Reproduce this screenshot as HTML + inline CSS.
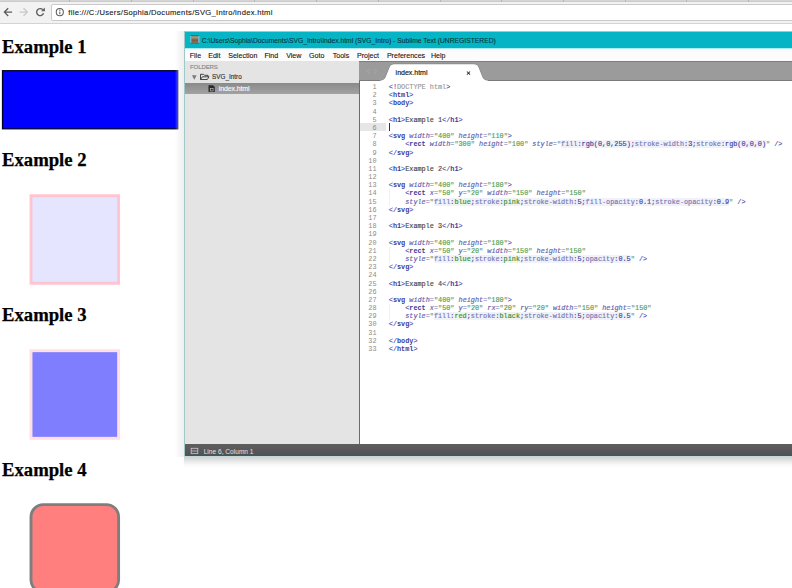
<!DOCTYPE html>
<html><head><meta charset="utf-8">
<style>
*{margin:0;padding:0;box-sizing:border-box}
html,body{width:792px;height:588px;overflow:hidden;background:#fff;position:relative;font-family:"Liberation Sans",sans-serif}
.a{position:absolute}
/* chrome */
#topstrip{left:0;top:0;width:792px;height:2px;background:linear-gradient(#dadada,#c6c6c6)}
#toolbar{left:0;top:2px;width:792px;height:22px;background:#f2f2f2;border-bottom:1px solid #d3d3d3}
#addr{left:51px;top:4px;width:760px;height:17px;background:#fff;border:1px solid #cacaca;border-radius:2px}
#url{left:68.3px;top:9.2px;font-size:7.6px;line-height:8px;color:#202020;-webkit-text-stroke:0.12px #202020;white-space:nowrap;letter-spacing:0.3px}
.tick{position:absolute;top:0;width:1px;height:2px;background:#b8b8b8}
/* page */
h1{position:absolute;left:2px;font-family:"Liberation Serif",serif;font-weight:bold;font-size:18.7px;line-height:18px;color:#000;white-space:nowrap;-webkit-text-stroke:0.25px #000}
/* sublime */
#win{left:183.8px;top:30.5px;width:620px;height:426px;background:#e5e5e5;border-left:1.4px solid #9fc8c8}
#lsh{left:175px;top:31px;width:9px;height:426px;background:linear-gradient(90deg,rgba(236,236,236,0),rgba(236,236,236,0.5) 50%,#efefef)}
#title{left:185px;top:30.5px;width:607px;height:18.5px;background:#06b5c5;border-top:1px solid #6fdde6;border-bottom:1px solid #a6eef2}
#ttext{left:201.8px;top:37px;font-size:6.72px;line-height:8px;color:#04343a;-webkit-text-stroke:0.1px #04343a;white-space:nowrap;letter-spacing:0.02px}
#menu{left:185px;top:48.8px;width:607px;height:12px;background:#fcfcfc}
.mi{position:absolute;top:51.7px;font-size:7.1px;line-height:8px;color:#141414;white-space:nowrap;-webkit-text-stroke:0.1px #141414}
#side{left:185px;top:60.7px;width:174px;height:383.5px;background:#e4e4e4}
#editor{left:359px;top:60.7px;width:433px;height:383.5px;background:#fff;border-left:1px solid #6c6c6c}
#tabbar{left:359px;top:60.7px;width:433px;height:20.3px;background:#9b9b9b;border-top:1px solid #7e7e7e;border-bottom:1px solid #7a7a7a}
#status{left:185px;top:444.2px;width:607px;height:12px;background:linear-gradient(#5e5e5e,#575459 70%,#3f5858);}
#sbl{left:184px;top:456.2px;width:608px;height:12px;background:linear-gradient(#c4d6d6,#d6d8da 20%,#e9e9e9 45%,#f7f7f7 70%,#ffffff)}
#stext{left:203.7px;top:448px;font-size:6.6px;line-height:8px;color:#e2e2e2;white-space:nowrap}
#folders{left:190px;top:63.3px;font-size:6.1px;line-height:7px;color:#858585;white-space:nowrap;letter-spacing:-0.15px;-webkit-text-stroke:0.1px #858585}
#svgi{left:211.6px;top:73.0px;font-size:7px;line-height:8px;color:#262626;white-space:nowrap;letter-spacing:0;-webkit-text-stroke:0.1px #262626;transform:scaleX(0.91);transform-origin:0 0}
#selbar{left:185px;top:82.8px;width:174px;height:11px;background:linear-gradient(#8a8a8a,#a2a2a2)}
#sidx{left:218.8px;top:84.6px;font-size:7px;line-height:8px;color:#f8f8f8;letter-spacing:-0.12px;white-space:nowrap;-webkit-text-stroke:0.15px #f8f8f8}
#tabtxt{left:395.6px;top:69px;font-size:7.0px;line-height:8px;color:#141414;white-space:nowrap;letter-spacing:0px;-webkit-text-stroke:0.15px #141414}
#gut6{left:360px;top:123.3px;width:26px;height:7.7px;background:#e6e6e6}
#cursor{left:388.6px;top:123.2px;width:1px;height:8px;background:#333}
.ln{left:360px;top:83px;width:16.5px;text-align:right;font-family:"Liberation Mono",monospace;font-size:6.84px;line-height:8.19px;color:#8c8c8c}
.code{left:388.8px;top:83px;font-family:"Liberation Mono",monospace;font-size:6.84px;line-height:8.19px;color:#333;white-space:pre;-webkit-text-stroke:0.15px currentColor}
.p{color:#4e4eaa}.t{color:#3a3a98;font-weight:bold;-webkit-text-stroke:0}.at{color:#5e5eae;font-style:italic}.eq{color:#7474b0}.q{color:#7a9a7a}.s{color:#509c50}
.tx{color:#474747}.dt{color:#9a9a9a}.css{background:#f0f1f9}.pn{color:#7676b2}.co{color:#50509a}.cv{color:#3d8a3d;background:#eef5ee}.cn{color:#42429c}
</style></head><body>
<div class="a" id="topstrip"></div>
<div class="tick" style="left:69px"></div><div class="tick" style="left:131px"></div><div class="tick" style="left:193px"></div><div class="tick" style="left:254px"></div><div class="tick" style="left:316px"></div><div class="tick" style="left:378px"></div><div class="tick" style="left:440px"></div><div class="tick" style="left:501px"></div><div class="tick" style="left:563px"></div><div class="tick" style="left:625px"></div><div class="tick" style="left:686px"></div><div class="tick" style="left:748px"></div>
<div class="a" id="toolbar"></div>
<div class="a" id="addr"></div>
<svg class="a" style="left:0;top:0" width="80" height="24">
  <path d="M12.1 12.1 H4.6 M8.2 8.2 L4.4 12.1 L8.2 16.0" fill="none" stroke="#5c5c5c" stroke-width="1.3"/>
  <path d="M19.6 12.1 H27.1 M23.5 8.2 L27.3 12.1 L23.5 16.0" fill="none" stroke="#c9c9c9" stroke-width="1.3"/>
  <path d="M42.71 9.59 A3.55 3.55 0 1 0 43.54 13.31" fill="none" stroke="#5c5c5c" stroke-width="1.35"/>
  <path d="M41.1 11.3 L44.9 11.3 L44.9 7.6 Z" fill="#5c5c5c"/>
  <circle cx="59.8" cy="12.15" r="3.55" fill="none" stroke="#5c5c5c" stroke-width="1.05"/>
  <rect x="59.3" y="11.6" width="1.05" height="2.7" fill="#5c5c5c"/>
  <rect x="59.25" y="9.6" width="1.15" height="1.15" fill="#5c5c5c"/>
</svg>
<div class="a" id="url">file:///C:/Users/Sophia/Documents/SVG_Intro/index.html</div>

<h1 style="top:38px">Example 1</h1>
<svg class="a" style="left:0;top:0" width="792" height="588">
  <rect x="2.5" y="70.7" width="175.3" height="58.1" fill="#0000ff" stroke="#000028" stroke-width="1.25"/>
  <rect x="31" y="195.7" width="87.6" height="87.6" fill="blue" fill-opacity="0.1" stroke="pink" stroke-width="2.9" stroke-opacity="0.9"/>
  <rect x="31" y="350.7" width="87.6" height="87.6" fill="blue" stroke="pink" stroke-width="2.9" opacity="0.5"/>
  <rect x="31" y="504.6" width="87.6" height="87.6" rx="12.3" ry="12.3" fill="red" stroke="black" stroke-width="2.9" opacity="0.5"/>
</svg>
<h1 style="top:151px">Example 2</h1>
<h1 style="top:306px">Example 3</h1>
<h1 style="top:461px">Example 4</h1>

<div class="a" id="lsh"></div><div class="a" id="win"></div>
<div class="a" id="title"></div>
<svg class="a" style="left:189px;top:34px" width="12" height="11">
  <defs><linearGradient id="ig" x1="0" y1="0" x2="0" y2="1"><stop offset="0" stop-color="#c8a888"/><stop offset="0.6" stop-color="#7a5a38"/><stop offset="1" stop-color="#8a7a6a"/></linearGradient></defs>
  <rect x="1.6" y="1.3" width="8.4" height="8.2" fill="#2f6468"/>
  <rect x="2.3" y="2.4" width="7" height="6.3" fill="url(#ig)"/>
  <rect x="1.4" y="2" width="0.9" height="6.8" fill="#9adfe4"/>
  <rect x="9.4" y="2" width="0.9" height="6.8" fill="#9adfe4"/>
</svg>
<div class="a" id="ttext">C:\Users\Sophia\Documents\SVG_Intro\index.html (SVG_Intro) - Sublime Text (UNREGISTERED)</div>
<div class="a" id="menu"></div>
<div class="mi" style="left:189.7px">File</div>
<div class="mi" style="left:208.2px">Edit</div>
<div class="mi" style="left:228.2px">Selection</div>
<div class="mi" style="left:264.4px">Find</div>
<div class="mi" style="left:286.2px">View</div>
<div class="mi" style="left:309px">Goto</div>
<div class="mi" style="left:332.7px">Tools</div>
<div class="mi" style="left:357px">Project</div>
<div class="mi" style="left:386.9px">Preferences</div>
<div class="mi" style="left:430.9px">Help</div>
<div class="a" id="side"></div>
<div class="a" id="folders">FOLDERS</div>
<svg class="a" style="left:185px;top:70px" width="30" height="26">
  <path d="M7 5.3 L11.6 5.3 L9.3 9.7 Z" fill="#7a7a7a"/>
  <path d="M15.5 4.3 H18.5 L19.5 5.3 H23 V6.8 M15.5 4.3 V9.5 H22.3 L24 6.8 H17.3 L15.5 9.5" fill="none" stroke="#333" stroke-width="0.9"/>
</svg>
<div class="a" id="svgi">SVG_Intro</div>
<div class="a" id="selbar"></div>
<svg class="a" style="left:207px;top:84px" width="10" height="10">
  <path d="M1.5 1.3 H6 L7.8 3.1 V8 H1.5 Z" fill="#2a2a2a"/>
  <rect x="3.3" y="4.6" width="2.8" height="2.4" fill="none" stroke="#bbb" stroke-width="0.7"/>
</svg>
<div class="a" id="sidx">index.html</div>
<div class="a" id="editor"></div>
<div class="a" id="tabbar"></div>
<svg class="a" style="left:359px;top:61px" width="140" height="21">
  <path d="M21.3 19.6 C24.3 19.6 25.6 18.3 26.8 15.8 L30.6 6.2 C31.6 4 32.8 3.2 35.3 3.2 L114.8 3.2 C117.3 3.2 118.5 4 119.5 6.2 L123.3 15.8 C124.5 18.3 125.8 19.6 128.8 19.6" fill="none" stroke="#777" stroke-width="0.9"/>
  <path d="M21.3 19.6 C24.3 19.6 25.6 18.3 26.8 15.8 L30.6 6.2 C31.6 4 32.8 3.2 35.3 3.2 L114.8 3.2 C117.3 3.2 118.5 4 119.5 6.2 L123.3 15.8 C124.5 18.3 125.8 19.6 128.8 19.6 L128.8 21 L21.3 21 Z" fill="#fff"/>
  <path d="M10.6 8.2 L8.4 10.4 L10.6 12.6 M15.2 8.2 L17.4 10.4 L15.2 12.6" fill="none" stroke="#a4a4a4" stroke-width="1.2"/>
  <path d="M107.9 10.5 L111.1 13.7 M111.1 10.5 L107.9 13.7" stroke="#3a3a3a" stroke-width="1.05"/>
</svg>
<div class="a" id="tabtxt">index.html</div>
<div class="a" id="gut6"></div>
<div class="a" style="left:388.5px;top:189.47px;width:1px;height:16.4px;background:#f0f0f0"></div><div class="a" style="left:388.5px;top:246.80px;width:1px;height:16.4px;background:#f0f0f0"></div><div class="a" style="left:388.5px;top:304.13px;width:1px;height:16.4px;background:#f0f0f0"></div>
<div class="a" id="cursor"></div>
<div class="a" id="status"></div><div class="a" id="sbl"></div>
<svg class="a" style="left:185px;top:444px" width="16" height="12">
  <rect x="6.2" y="4.3" width="6.6" height="5.3" fill="none" stroke="#c4c4c4" stroke-width="0.85"/>
  <path d="M6.2 7 H12.8" stroke="#c4c4c4" stroke-width="0.8"/>
</svg>
<div class="a" id="stext">Line 6, Column 1</div>
<pre class="a code" id="code"><span class="p">&lt;!</span><span class="dt">DOCTYPE html</span><span class="p">&gt;</span>
<span class="p">&lt;</span><span class="t">html</span><span class="p">&gt;</span>
<span class="p">&lt;</span><span class="t">body</span><span class="p">&gt;</span>

<span class="p">&lt;</span><span class="t">h1</span><span class="p">&gt;</span><span class="tx">Example 1</span><span class="p">&lt;/</span><span class="t">h1</span><span class="p">&gt;</span>

<span class="p">&lt;</span><span class="t">svg</span> <span class="at">width</span><span class="eq">=</span><span class="q">"</span><span class="s">400</span><span class="q">"</span> <span class="at">height</span><span class="eq">=</span><span class="q">"</span><span class="s">110</span><span class="q">"</span><span class="p">&gt;</span>
    <span class="p">&lt;</span><span class="t">rect</span> <span class="at">width</span><span class="eq">=</span><span class="q">"</span><span class="s">300</span><span class="q">"</span> <span class="at">height</span><span class="eq">=</span><span class="q">"</span><span class="s">100</span><span class="q">"</span> <span class="at">style</span><span class="eq">=</span><span class="q">"</span><span class="css"><span class="pn">fill</span><span class="co">:</span><span class="cn">rgb(0,0,255)</span><span class="co">;</span><span class="pn">stroke-width</span><span class="co">:</span><span class="cn">3</span><span class="co">;</span><span class="pn">stroke</span><span class="co">:</span><span class="cn">rgb(0,0,0)</span></span><span class="q">"</span> <span class="p">/&gt;</span>
<span class="p">&lt;/</span><span class="t">svg</span><span class="p">&gt;</span>

<span class="p">&lt;</span><span class="t">h1</span><span class="p">&gt;</span><span class="tx">Example 2</span><span class="p">&lt;/</span><span class="t">h1</span><span class="p">&gt;</span>

<span class="p">&lt;</span><span class="t">svg</span> <span class="at">width</span><span class="eq">=</span><span class="q">"</span><span class="s">400</span><span class="q">"</span> <span class="at">height</span><span class="eq">=</span><span class="q">"</span><span class="s">180</span><span class="q">"</span><span class="p">&gt;</span>
    <span class="p">&lt;</span><span class="t">rect</span> <span class="at">x</span><span class="eq">=</span><span class="q">"</span><span class="s">50</span><span class="q">"</span> <span class="at">y</span><span class="eq">=</span><span class="q">"</span><span class="s">20</span><span class="q">"</span> <span class="at">width</span><span class="eq">=</span><span class="q">"</span><span class="s">150</span><span class="q">"</span> <span class="at">height</span><span class="eq">=</span><span class="q">"</span><span class="s">150</span><span class="q">"</span>
    <span class="at">style</span><span class="eq">=</span><span class="q">"</span><span class="css"><span class="pn">fill</span><span class="co">:</span><span class="cv">blue</span><span class="co">;</span><span class="pn">stroke</span><span class="co">:</span><span class="cv">pink</span><span class="co">;</span><span class="pn">stroke-width</span><span class="co">:</span><span class="cn">5</span><span class="co">;</span><span class="pn">fill-opacity</span><span class="co">:</span><span class="cn">0.1</span><span class="co">;</span><span class="pn">stroke-opacity</span><span class="co">:</span><span class="cn">0.9</span></span><span class="q">"</span> <span class="p">/&gt;</span>
<span class="p">&lt;/</span><span class="t">svg</span><span class="p">&gt;</span>

<span class="p">&lt;</span><span class="t">h1</span><span class="p">&gt;</span><span class="tx">Example 3</span><span class="p">&lt;/</span><span class="t">h1</span><span class="p">&gt;</span>

<span class="p">&lt;</span><span class="t">svg</span> <span class="at">width</span><span class="eq">=</span><span class="q">"</span><span class="s">400</span><span class="q">"</span> <span class="at">height</span><span class="eq">=</span><span class="q">"</span><span class="s">180</span><span class="q">"</span><span class="p">&gt;</span>
    <span class="p">&lt;</span><span class="t">rect</span> <span class="at">x</span><span class="eq">=</span><span class="q">"</span><span class="s">50</span><span class="q">"</span> <span class="at">y</span><span class="eq">=</span><span class="q">"</span><span class="s">20</span><span class="q">"</span> <span class="at">width</span><span class="eq">=</span><span class="q">"</span><span class="s">150</span><span class="q">"</span> <span class="at">height</span><span class="eq">=</span><span class="q">"</span><span class="s">150</span><span class="q">"</span>
    <span class="at">style</span><span class="eq">=</span><span class="q">"</span><span class="css"><span class="pn">fill</span><span class="co">:</span><span class="cv">blue</span><span class="co">;</span><span class="pn">stroke</span><span class="co">:</span><span class="cv">pink</span><span class="co">;</span><span class="pn">stroke-width</span><span class="co">:</span><span class="cn">5</span><span class="co">;</span><span class="pn">opacity</span><span class="co">:</span><span class="cn">0.5</span></span><span class="q">"</span> <span class="p">/&gt;</span>
<span class="p">&lt;/</span><span class="t">svg</span><span class="p">&gt;</span>

<span class="p">&lt;</span><span class="t">h1</span><span class="p">&gt;</span><span class="tx">Example 4</span><span class="p">&lt;/</span><span class="t">h1</span><span class="p">&gt;</span>

<span class="p">&lt;</span><span class="t">svg</span> <span class="at">width</span><span class="eq">=</span><span class="q">"</span><span class="s">400</span><span class="q">"</span> <span class="at">height</span><span class="eq">=</span><span class="q">"</span><span class="s">180</span><span class="q">"</span><span class="p">&gt;</span>
    <span class="p">&lt;</span><span class="t">rect</span> <span class="at">x</span><span class="eq">=</span><span class="q">"</span><span class="s">50</span><span class="q">"</span> <span class="at">y</span><span class="eq">=</span><span class="q">"</span><span class="s">20</span><span class="q">"</span> <span class="at">rx</span><span class="eq">=</span><span class="q">"</span><span class="s">20</span><span class="q">"</span> <span class="at">ry</span><span class="eq">=</span><span class="q">"</span><span class="s">20</span><span class="q">"</span> <span class="at">width</span><span class="eq">=</span><span class="q">"</span><span class="s">150</span><span class="q">"</span> <span class="at">height</span><span class="eq">=</span><span class="q">"</span><span class="s">150</span><span class="q">"</span>
    <span class="at">style</span><span class="eq">=</span><span class="q">"</span><span class="css"><span class="pn">fill</span><span class="co">:</span><span class="cv">red</span><span class="co">;</span><span class="pn">stroke</span><span class="co">:</span><span class="cv">black</span><span class="co">;</span><span class="pn">stroke-width</span><span class="co">:</span><span class="cn">5</span><span class="co">;</span><span class="pn">opacity</span><span class="co">:</span><span class="cn">0.5</span></span><span class="q">"</span> <span class="p">/&gt;</span>
<span class="p">&lt;/</span><span class="t">svg</span><span class="p">&gt;</span>

<span class="p">&lt;/</span><span class="t">body</span><span class="p">&gt;</span>
<span class="p">&lt;/</span><span class="t">html</span><span class="p">&gt;</span></pre>
<pre class="a ln" id="lns">1
2
3
4
5
6
7
8
9
10
11
12
13
14
15
16
17
18
19
20
21
22
23
24
25
26
27
28
29
30
31
32
33</pre>

</body></html>
